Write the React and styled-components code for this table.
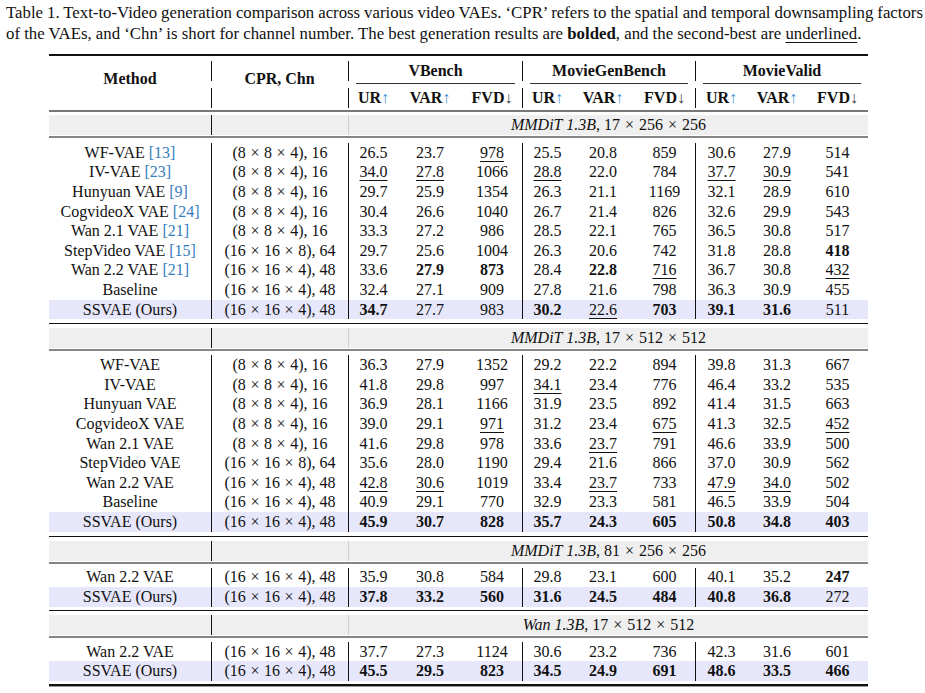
import React from "react";
import styled, { createGlobalStyle } from "styled-components";

const GlobalStyle = createGlobalStyle`
  html, body { margin: 0; padding: 0; background: #fff; }
  body {
    font-family: "Liberation Serif", "Times New Roman", serif;
    color: #111;
  }
`;

const COLS = "162px 137px 50px 64px 60px 50px 62px 61px 52px 60px 61px";
const CITE = "#367dbd";
const UPC = "#3b8fd6";
const LINE = "#111";

const Page = styled.div`
  width: 925px;
  height: 693px;
  overflow: hidden;
  padding-top: 2px;
  box-sizing: border-box;
`;

const Caption = styled.div`
  padding: 0 2px 0 6px;
  font-size: 16.8px;
  line-height: 21px;
`;

const CaptionLine = styled.div`
  text-align: ${(p) => (p.$justify ? "justify" : "left")};
  text-align-last: ${(p) => (p.$justify ? "justify" : "left")};
  word-spacing: ${(p) => (p.$justify ? "-1.5px" : "normal")};
`;

const U = styled.span`
  text-decoration: underline;
  text-decoration-thickness: 1px;
  text-underline-offset: 3px;
`;

const Table = styled.div`
  margin: 10px 0 0 49px;
  width: 819px;
  font-size: 16px;
  display: flex;
  flex-direction: column;
`;

const Rule = styled.div`
  height: ${(p) => p.$h}px;
  background: ${(p) => p.$c};
  margin-top: ${(p) => p.$mt || 0}px;
  flex: none;
`;

const Header = styled.div`
  display: grid;
  grid-template-columns: ${COLS};
  grid-template-rows: 20px 7px 20px;
  padding: 5px 0 2px;
  font-weight: bold;
  line-height: 20px;
`;

const HeadSpan = styled.div`
  grid-column: ${(p) => p.$col};
  grid-row: 1 / 4;
  display: flex;
  align-items: center;
  justify-content: center;
  padding-bottom: 11px;
`;

const VLine = styled.div`
  grid-column: ${(p) => p.$col};
  grid-row: ${(p) => p.$row};
  border-left: 1px solid ${LINE};
`;

const Group = styled.div`
  grid-column: ${(p) => p.$span};
  grid-row: 1;
  border-left: 1px solid ${LINE};
  text-align: center;
`;

const CMid = styled.div`
  grid-column: ${(p) => p.$span};
  grid-row: 2;
  align-self: start;
  margin: 2px 7px 0 8px;
  height: 1px;
  background: #333;
`;

const SubHead = styled.div`
  grid-column: ${(p) => p.$col};
  grid-row: 3;
  text-align: center;
  border-left: ${(p) => (p.$sep ? `1px solid ${LINE}` : "none")};
`;

const Arrow = styled.span`
  font-weight: normal;
  color: ${(p) => (p.$up ? UPC : "#444")};
`;

const Band = styled.div`
  display: grid;
  grid-template-columns: ${COLS};
  height: 20px;
  line-height: 20px;
  background: #efefef;
  margin-top: ${(p) => p.$mt}px;
  flex: none;
`;

const BandCell = styled.div`
  grid-column: ${(p) => p.$col};
  border-left: ${(p) => (p.$line ? `1px solid ${p.$line}` : "none")};
  text-align: center;
  white-space: nowrap;
`;

const Em = styled.i`
  font-style: italic;
`;

const Rows = styled.div`
  display: flex;
  flex-direction: column;
  margin-top: ${(p) => p.$mt}px;
  flex: none;
`;

const Row = styled.div`
  display: grid;
  grid-template-columns: ${COLS};
  height: ${(p) => p.$h}px;
  background: ${(p) => (p.$hl ? "#e7e7fb" : "transparent")};
`;

const Cell = styled.div`
  display: flex;
  align-items: center;
  justify-content: center;
  white-space: nowrap;
  border-left: ${(p) => (p.$sep ? `1px solid ${LINE}` : "none")};
`;

const Bold = styled.b`
  font-weight: bold;
`;

const Cite = styled.span`
  color: ${CITE};
  margin-left: 4px;
`;

const Times = styled.span`
  margin: 0 ${(p) => p.$gap || 4.6}px;
`;

const SEPS = [false, true, true, false, false, true, false, false, true, false, false];

function Val({ v }) {
  if (v.startsWith("*")) return <Bold>{v.slice(1)}</Bold>;
  if (v.startsWith("_")) return <U>{v.slice(1)}</U>;
  return <>{v}</>;
}

function Dims({ parts, gap }) {
  return (
    <>
      {parts.map((p, i) => (
        <React.Fragment key={i}>
          {i > 0 && <Times $gap={gap}>×</Times>}
          {p}
        </React.Fragment>
      ))}
    </>
  );
}

function Cpr({ a, b, c, ch }) {
  return (
    <>
      {"("}
      <Dims parts={[a, b, c]} />
      {`), ${ch}`}
    </>
  );
}

const C8 = { a: 8, b: 8, c: 4, ch: 16 };
const C16_8 = { a: 16, b: 16, c: 8, ch: 64 };
const C16 = { a: 16, b: 16, c: 4, ch: 48 };

const sections = [
  {
    title: ["MMDiT 1.3B", [17, 256, 256]],
    h: 19.6,
    rows: [
      ["WF-VAE", "13", C8, "26.5 23.7 _978 25.5 20.8 859 30.6 27.9 514"],
      ["IV-VAE", "23", C8, "_34.0 _27.8 1066 _28.8 22.0 784 _37.7 _30.9 541"],
      ["Hunyuan VAE", "9", C8, "29.7 25.9 1354 26.3 21.1 1169 32.1 28.9 610"],
      ["CogvideoX VAE", "24", C8, "30.4 26.6 1040 26.7 21.4 826 32.6 29.9 543"],
      ["Wan 2.1 VAE", "21", C8, "33.3 27.2 986 28.5 22.1 765 36.5 30.8 517"],
      ["StepVideo VAE", "15", C16_8, "29.7 25.6 1004 26.3 20.6 742 31.8 28.8 *418"],
      ["Wan 2.2 VAE", "21", C16, "33.6 *27.9 *873 28.4 *22.8 _716 36.7 30.8 _432"],
      ["Baseline", null, C16, "32.4 27.1 909 27.8 21.6 798 36.3 30.9 455"],
      ["SSVAE (Ours)", null, C16, "*34.7 27.7 983 *30.2 _22.6 *703 *39.1 *31.6 511", true],
    ],
  },
  {
    title: ["MMDiT 1.3B", [17, 512, 512]],
    h: 19.6,
    rows: [
      ["WF-VAE", null, C8, "36.3 27.9 1352 29.2 22.2 894 39.8 31.3 667"],
      ["IV-VAE", null, C8, "41.8 29.8 997 _34.1 23.4 776 46.4 33.2 535"],
      ["Hunyuan VAE", null, C8, "36.9 28.1 1166 31.9 23.5 892 41.4 31.5 663"],
      ["CogvideoX VAE", null, C8, "39.0 29.1 _971 31.2 23.4 _675 41.3 32.5 _452"],
      ["Wan 2.1 VAE", null, C8, "41.6 29.8 978 33.6 _23.7 791 46.6 33.9 500"],
      ["StepVideo VAE", null, C16_8, "35.6 28.0 1190 29.4 21.6 866 37.0 30.9 562"],
      ["Wan 2.2 VAE", null, C16, "_42.8 _30.6 1019 33.4 _23.7 733 _47.9 _34.0 502"],
      ["Baseline", null, C16, "40.9 29.1 770 32.9 23.3 581 46.5 33.9 504"],
      ["SSVAE (Ours)", null, C16, "*45.9 *30.7 *828 *35.7 *24.3 *605 *50.8 *34.8 *403", true],
    ],
  },
  {
    title: ["MMDiT 1.3B", [81, 256, 256]],
    h: 19.6,
    rows: [
      ["Wan 2.2 VAE", null, C16, "35.9 30.8 584 29.8 23.1 600 40.1 35.2 *247"],
      ["SSVAE (Ours)", null, C16, "*37.8 *33.2 *560 *31.6 *24.5 *484 *40.8 *36.8 272", true],
    ],
  },
  {
    title: ["Wan 1.3B", [17, 512, 512]],
    h: 19.6,
    rows: [
      ["Wan 2.2 VAE", null, C16, "37.7 27.3 1124 30.6 23.2 736 42.3 31.6 601"],
      ["SSVAE (Ours)", null, C16, "*45.5 *29.5 *823 *34.5 *24.9 *691 *48.6 *33.5 *466", true],
    ],
  },
];

const layout = [
  { bandMt: 3, lineMt: 1, rowsMt: 5, ruleMt: 4 },
  { bandMt: 4, lineMt: 1, rowsMt: 4, ruleMt: 4 },
  { bandMt: 4, lineMt: 1, rowsMt: 4, ruleMt: 3 },
  { bandMt: 4, lineMt: 1, rowsMt: 4, ruleMt: 3 },
];

function DataRow({ r, h }) {
  const [name, cite, cpr, vals, hl] = r;
  const nums = vals.split(" ");
  return (
    <Row $h={h} $hl={hl}>
      <Cell>
        {name}
        {cite && <Cite>[{cite}]</Cite>}
      </Cell>
      <Cell $sep>
        <Cpr {...cpr} />
      </Cell>
      {nums.map((v, i) => (
        <Cell key={i} $sep={SEPS[i + 2]}>
          <Val v={v} />
        </Cell>
      ))}
    </Row>
  );
}

function Section({ s, l, last }) {
  return (
    <>
      <Band $mt={l.bandMt}>
        <BandCell $col={1} />
        <BandCell $col={2} $line={LINE} />
        <BandCell $col="3 / 12" $line="#cfcfcf">
          <Em>{s.title[0]}</Em>
          {", "}
          <Dims parts={s.title[1]} gap={5} />
        </BandCell>
      </Band>
      <Rule $h={2} $c="#858585" $mt={l.lineMt} />
      <Rows $mt={l.rowsMt}>
        {s.rows.map((r, i) => (
          <DataRow key={i} r={r} h={s.h} />
        ))}
      </Rows>
      {last ? (
        <>
          <Rule $h={2} $c="#111" $mt={l.ruleMt} />
          <Rule $h={1} $c="#9a9a9a" />
        </>
      ) : (
        <Rule $h={1} $c="#111" $mt={l.ruleMt} />
      )}
    </>
  );
}

const groups = [
  { name: "VBench", span: "3 / 6", first: 3 },
  { name: "MovieGenBench", span: "6 / 9", first: 6 },
  { name: "MovieValid", span: "9 / 12", first: 9 },
];

export default function App() {
  return (
    <>
      <GlobalStyle />
      <Page>
        <Caption>
          <CaptionLine $justify>
            Table 1. Text-to-Video generation comparison across various video VAEs. ‘CPR’ refers to the
            spatial and temporal downsampling factors
          </CaptionLine>
          <CaptionLine>
            of the VAEs, and ‘Chn’ is short for channel number. The best generation results are{" "}
            <Bold>bolded</Bold>, and the second-best are <U>underlined</U>.
          </CaptionLine>
        </Caption>
        <Table>
          <Rule $h={2} $c="#111" />
          <Header>
            <HeadSpan $col={1}>Method</HeadSpan>
            <HeadSpan $col={2}>CPR, Chn</HeadSpan>
            <VLine $col={2} $row={1} />
            <VLine $col={2} $row={3} />
            {groups.map((g) => (
              <React.Fragment key={g.name}>
                <Group $span={g.span}>{g.name}</Group>
                <CMid $span={g.span} />
                <SubHead $col={g.first} $sep>
                  UR<Arrow $up>↑</Arrow>
                </SubHead>
                <SubHead $col={g.first + 1}>
                  VAR<Arrow $up>↑</Arrow>
                </SubHead>
                <SubHead $col={g.first + 2}>
                  FVD<Arrow>↓</Arrow>
                </SubHead>
              </React.Fragment>
            ))}
          </Header>
          <Rule $h={2} $c="#777" />
          {sections.map((s, i) => (
            <Section key={i} s={s} l={layout[i]} last={i === sections.length - 1} />
          ))}
        </Table>
      </Page>
    </>
  );
}
